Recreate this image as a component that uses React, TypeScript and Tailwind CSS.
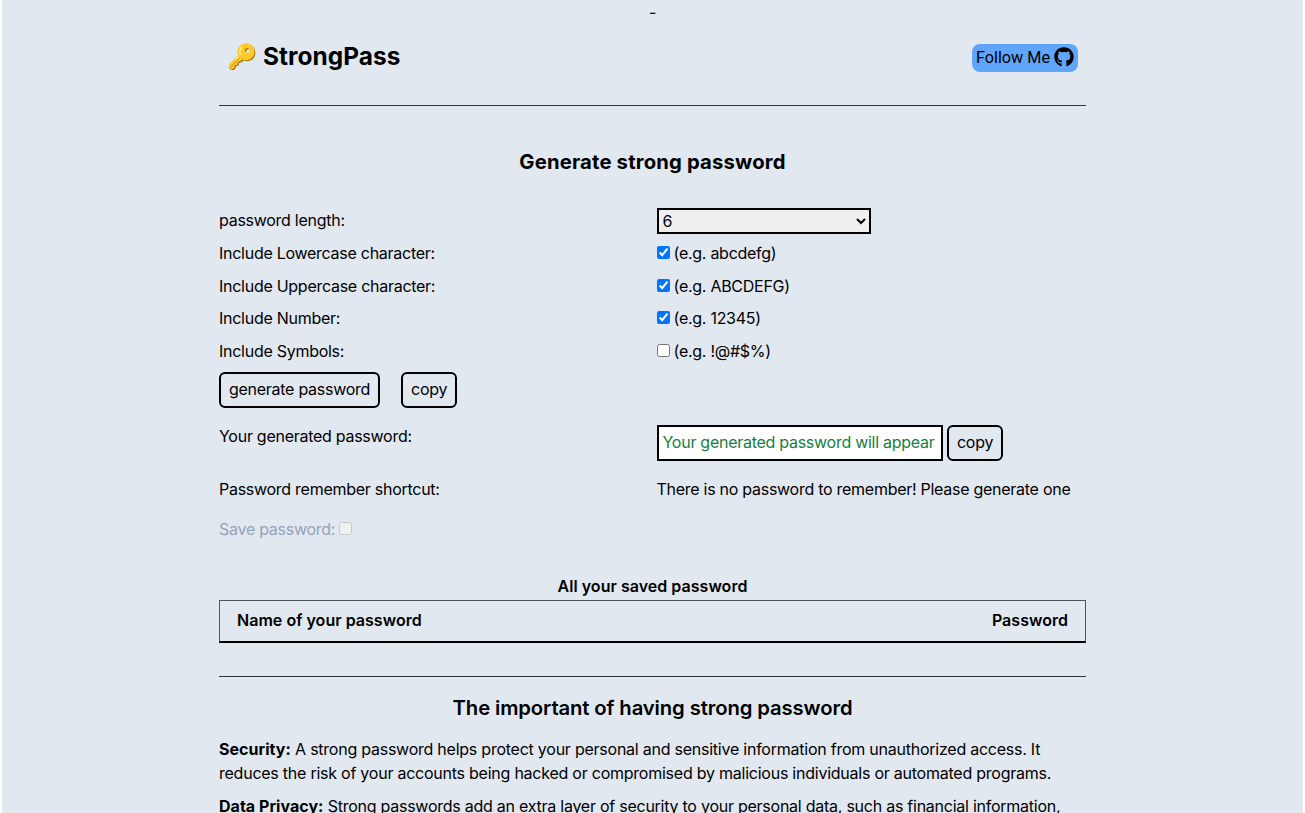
import React from "react";
import { FaGithub } from "react-icons/fa";

const options = [
  { label: "Include Lowercase character:", example: "(e.g. abcdefg)", on: true },
  { label: "Include Uppercase character:", example: "(e.g. ABCDEFG)", on: true },
  { label: "Include Number:", example: "(e.g. 12345)", on: true },
  { label: "Include Symbols:", example: "(e.g. !@#$%)", on: false },
];

function Button({ children }: { children: React.ReactNode }) {
  return (
    <button className="h-[36px] rounded-[6px] border-2 border-black px-2 pb-px tracking-[-0.27px] whitespace-nowrap">
      {children}
    </button>
  );
}

function Header() {
  return (
    <header className="flex h-[82px] items-start justify-between border-b border-[#30343a] pr-2 pl-2">
      <h1 className="flex h-[65px] items-center text-[24.4px] font-bold tracking-[0.08px] whitespace-pre">
        🔑 StrongPass
      </h1>
      <a className="mt-5 flex h-7 items-center gap-1 rounded-lg bg-[#60a5fa] pr-1 pl-1 font-[Roboto,sans-serif] text-[16.2px] tracking-normal">
        <span className="pt-px">Follow Me</span>
        <FaGithub className="relative -top-px size-5" />
      </a>
    </header>
  );
}

export default function App() {
  return (
    <div className="bg-white px-0.5">
      <div className="h-[813px] overflow-hidden bg-[#e2e8f0] font-[Inter,sans-serif] text-[16px] leading-[24.4px] tracking-[-0.27px] text-black">
        <div className="h-6 text-center">-</div>
        <main className="mx-auto w-[867px]">
          <Header />
          <h2 className="mt-[42px] text-center text-[20.3px] leading-7 font-bold tracking-[0.16px]">Generate strong password</h2>

          <section className="mt-8">
            <div className="flex h-[33px] items-start">
              <label className="w-[437.5px] shrink-0">password length:</label>
              <select className="h-[26px] w-[214.5px] border-2 border-black bg-[#efefef] px-0 text-[16px] leading-5" defaultValue="6">
                <option>6</option>
                <option>8</option>
                <option>12</option>
              </select>
            </div>
            {options.map((o) => (
              <div key={o.label} className="flex h-[32.5px] items-start">
                <span className="w-[437.5px] shrink-0">{o.label}</span>
                <label className="flex">
                  <input type="checkbox" defaultChecked={o.on} className="mt-[5px] mr-1 size-[13px]" />
                  {o.example}
                </label>
              </div>
            ))}
            <div className="flex h-[53px] gap-[21px] pt-px">
              <Button>generate password</Button>
              <Button>copy</Button>
            </div>
            <div className="flex h-[53px] items-start">
              <span className="w-[437.5px] shrink-0">Your generated password:</span>
              <div className="flex gap-1 pt-px">
                <input
                  className="h-[36px] w-[286.5px] border-2 border-black bg-white px-1 pb-0.5 text-[16px] tracking-[-0.27px] placeholder:text-[#15803d]"
                  placeholder="Your generated password will appear here"
                />
                <Button>copy</Button>
              </div>
            </div>
            <div className="flex h-[40px] items-start">
              <span className="w-[437.5px] shrink-0">Password remember shortcut:</span>
              <span className="whitespace-nowrap">There is no password to remember! Please generate one</span>
            </div>
            <label className="flex text-[#94a3b8]">
              Save password:
              <input type="checkbox" disabled className="mt-[5px] ml-1 size-[13px]" />
            </label>
          </section>

          <section className="mt-[33px]">
            <h3 className="text-center font-semibold tracking-[0.03px]">All your saved password</h3>
            <div className="mt-px flex h-[43px] items-center justify-between border border-b-2 border-[#50545b] border-b-black px-[17px] pb-0.5 font-semibold tracking-[0.03px]">
              <span>Name of your password</span>
              <span>Password</span>
            </div>
          </section>

          <section className="mt-[33px] border-t border-[#30343a] pt-[17px]">
            <h2 className="text-center text-[20.3px] leading-7 font-semibold tracking-[-0.12px]">The important of having strong password</h2>
            <p className="mt-[15px] tracking-[-0.24px]">
              <b className="font-bold tracking-[0.03px]">Security:</b> A strong password helps protect your personal and sensitive
              information from unauthorized access. It reduces the risk of your accounts being hacked or compromised
              by malicious individuals or automated programs.
            </p>
            <p className="mt-2 tracking-[-0.25px]">
              <b className="font-bold tracking-[0.03px]">Data Privacy:</b> Strong passwords add an extra layer of security to your
              personal data, such as financial information,
            </p>
          </section>
        </main>
      </div>
    </div>
  );
}
